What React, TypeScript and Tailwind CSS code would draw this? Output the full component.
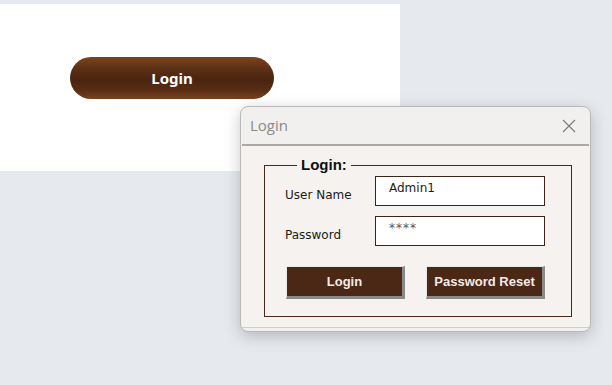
import React from 'react';

const LoginDialog: React.FC = () => {
  return (
    <div className="absolute left-[240px] top-[106px] w-[351px] h-[226px] rounded-[8px] border border-[#b9b9b9] bg-[#f1f0ef] shadow-[0_4px_16px_rgba(0,0,0,0.22)] flex flex-col overflow-hidden">
      {/* Title bar */}
      <div className="h-[37px] flex items-center justify-between pl-[9px] pr-[14px] shrink-0">
        <span className="text-[15px] text-[#8a8a8a] font-['Open_Sans',sans-serif]">Login</span>
        <svg width="14" height="14" viewBox="0 0 14 14" className="text-[#7a7a7a]">
          <path d="M1 1L13 13M13 1L1 13" stroke="currentColor" strokeWidth="1.1" />
        </svg>
      </div>

      {/* Body */}
      <div className="mx-[1px] mb-[3px] flex-1 border-t-2 border-[#a9a9a9] border-b border-b-[#cfcfcf] bg-[#f6f2ef] px-[22px] pt-[11px]">
        <fieldset className="border border-[#4a2818] h-[160px] pl-[20px] pr-[26px]">
          <legend className="ml-[12px] px-[4px] text-[15px] font-bold text-[#111] leading-[16px] font-['Liberation_Sans',Arial,sans-serif]">
            Login:
          </legend>

          <div className="flex flex-col gap-[10px] mt-[3px] font-['DejaVu_Sans','Noto_Sans',sans-serif] text-[12px] text-[#1a1a1a]">
            <div className="flex items-center">
              <span className="w-[90px] pt-[7px]">User Name</span>
              <div className="w-[170px] h-[30px] border border-[#3d2418] bg-white px-[13px] pt-[3px] leading-[16px]">
                Admin1
              </div>
            </div>
            <div className="flex items-center">
              <span className="w-[90px] pt-[7px]">Password</span>
              <div className="w-[170px] h-[30px] border border-[#3d2418] bg-white px-[13px] pt-[3px] leading-[16px] text-[#555] tracking-[1px]">
                ****
              </div>
            </div>
          </div>

          <div className="flex justify-between mt-[20px] pl-[1px] w-[260px] font-['Liberation_Sans',Arial,sans-serif] text-[13px] font-bold text-[#f3ece6]">
            <button className="w-[119px] h-[33px] bg-[#4b2716] border-t border-l border-t-[#e8e8e8] border-l-[#e8e8e8] border-r-[3px] border-b-[3px] border-r-[#8a8a8a] border-b-[#8a8a8a]">
              Login
            </button>
            <button className="w-[119px] h-[33px] bg-[#4b2716] border-t border-l border-t-[#e8e8e8] border-l-[#e8e8e8] border-r-[3px] border-b-[3px] border-r-[#8a8a8a] border-b-[#8a8a8a]">
              Password Reset
            </button>
          </div>
        </fieldset>
      </div>
    </div>
  );
};

export default function App() {
  return (
    <div className="relative w-[612px] h-[385px] bg-[#e6eaef] overflow-hidden">
      <div className="pt-[4px]">
        <div className="w-[400px] h-[167px] bg-white flex items-start pl-[70px] pt-[53px]">
          <button className="w-[204px] h-[42px] rounded-full bg-[linear-gradient(to_bottom,#7b4420_0%,#5a2f15_30%,#4a2410_55%,#5a2e14_80%,#7a431f_100%)] text-white text-[15px] font-bold font-['Noto_Sans',sans-serif]">
            Login
          </button>
        </div>
      </div>
      <LoginDialog />
    </div>
  );
}
